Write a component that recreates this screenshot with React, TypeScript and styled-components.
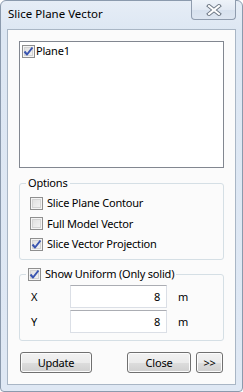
import styled, { createGlobalStyle } from "styled-components";

const GlobalStyle = createGlobalStyle`
  html, body {
    margin: 0;
    padding: 0;
    background: #ffffff;
  }
  body {
    font-family: "Noto Sans", "Open Sans", sans-serif;
    font-size: 11px;
    letter-spacing: -0.2px;
    color: #000;
  }
`;

const Window = styled.div`
  box-sizing: border-box;
  width: 243px;
  height: 392px;
  display: flex;
  flex-direction: column;
  background: linear-gradient(#e6edf6, #dde7f3 30px, #dfe8f4);
  border: 1px solid #8b9aad;
  border-radius: 6px 6px 4px 4px;
`;

const TitleBar = styled.div`
  height: 28px;
  display: flex;
  justify-content: space-between;
  align-items: flex-start;
  padding: 0 6px 0 7px;
`;

const Title = styled.span`
  margin-top: 5px;
  font-size: 11.5px;
  letter-spacing: 0;
  line-height: 16px;
`;

const CloseButton = styled.div`
  box-sizing: border-box;
  width: 45px;
  height: 20px;
  margin-top: -1px;
  display: flex;
  align-items: center;
  justify-content: center;
  border: 1px solid #8f9cae;
  border-top: none;
  border-radius: 0 0 4px 4px;
  background: linear-gradient(#eef3f9, #e2e9f3 50%, #d7e1ee 51%, #dde6f1);
`;

const Client = styled.div`
  flex: 1;
  margin: 0 6px 6px 6px;
  box-sizing: border-box;
  border: 1px solid #a9b6c5;
  background: #fbfbfb;
  padding: 11px 11px 0 11px;
  display: flex;
  flex-direction: column;
`;

const ListBox = styled.div`
  box-sizing: border-box;
  height: 127px;
  border: 1px solid #828790;
  background: #fff;
  padding: 2px 2px;
`;

const Group = styled.fieldset`
  margin: 0;
  box-sizing: border-box;
  height: ${({ $h }: { $h: number }) => $h}px;
  border: 1px solid #d5dfe5;
  border-radius: 3px;
  padding: 2px 0 0 10px;
  display: flex;
  flex-direction: column;
`;

const Legend = styled.legend`
  padding: 0 2px;
  margin-left: -4px;
  line-height: 16px;
  display: flex;
  align-items: center;
`;

const CheckRow = styled.label`
  display: flex;
  align-items: center;
  gap: ${({ $gap }: { $gap?: number }) => $gap ?? 4}px;
  height: ${({ $h }: { $h?: number }) => $h ?? 20.5}px;
  line-height: 16px;
  white-space: nowrap;
`;

const Box = styled.span`
  box-sizing: border-box;
  width: 13px;
  height: 13px;
  flex: none;
  border: 1px solid #8f8f8f;
  display: flex;
  align-items: center;
  justify-content: center;
  box-shadow: inset 0 0 0 1px #f4f4f4, inset 0 0 0 2px #d3d3d3;
  background: linear-gradient(135deg, #dcdcdc, #f6f6f6);
`;

const FieldRow = styled.div`
  display: flex;
  align-items: center;
  height: 25px;
`;

const FieldLabel = styled.span`
  width: 39px;
  padding-left: 1px;
`;

const Input = styled.div`
  box-sizing: border-box;
  width: 97px;
  height: 23px;
  border: 1px solid #dbdfe6;
  border-top-color: #abadb3;
  background: #fff;
  display: flex;
  align-items: center;
  justify-content: flex-end;
  padding-right: 6px;
`;

const Unit = styled.span`
  margin-left: 11px;
`;

const Footer = styled.div`
  display: flex;
  align-items: center;
  margin-top: 11px;
  padding-left: 1px;
`;

const Button = styled.button`
  box-sizing: border-box;
  width: ${({ $w }: { $w: number }) => $w}px;
  height: 21px;
  margin-left: ${({ $ml }: { $ml?: number }) => $ml ?? 0}px;
  border: 1px solid #707070;
  border-radius: 3px;
  background: linear-gradient(#f2f2f2, #ebebeb 50%, #dddddd 51%, #cfcfcf);
  box-shadow: inset 0 0 0 1px #fcfcfc;
  font-family: "Noto Sans", "Open Sans", sans-serif;
  font-size: 11px;
  letter-spacing: -0.2px;
  color: #000;
  padding: 0;
  line-height: 18px;
`;

function Check({ checked }: { checked?: boolean }) {
  return (
    <Box>
      {checked && (
        <svg width="11" height="11" viewBox="0 0 11 11">
          <path
            d="M1.5 5.5 L4 8.5 L9.5 1.5"
            fill="none"
            stroke="#3a55b0"
            strokeWidth="2"
            strokeLinejoin="round"
          />
        </svg>
      )}
    </Box>
  );
}

export default function App() {
  return (
    <>
      <GlobalStyle />
      <Window>
        <TitleBar>
          <Title>Slice Plane Vector</Title>
          <CloseButton>
            <svg width="16" height="12" viewBox="0 0 16 12">
              <path
                d="M3 2 L13 10 M13 2 L3 10"
                stroke="#6f7986"
                strokeWidth="4"
                strokeLinecap="square"
              />
              <path
                d="M3 2 L13 10 M13 2 L3 10"
                stroke="#ffffff"
                strokeWidth="2"
                strokeLinecap="square"
              />
            </svg>
          </CloseButton>
        </TitleBar>
        <Client>
          <ListBox>
            <CheckRow $gap={1} $h={14}>
              <Check checked />
              Plane1
            </CheckRow>
          </ListBox>
          <div style={{ height: 7 }} />
          <Group $h={85}>
            <Legend>Options</Legend>
            <CheckRow>
              <Check />
              Slice Plane Contour
            </CheckRow>
            <CheckRow>
              <Check />
              Full Model Vector
            </CheckRow>
            <CheckRow>
              <Check checked />
              Slice Vector Projection
            </CheckRow>
          </Group>
          <div style={{ height: 6 }} />
          <Group $h={75}>
            <Legend>
              <CheckRow $h={16}>
                <Check checked />
                Show Uniform (Only solid)
              </CheckRow>
            </Legend>
            <FieldRow>
              <FieldLabel>X</FieldLabel>
              <Input>8</Input>
              <Unit>m</Unit>
            </FieldRow>
            <FieldRow>
              <FieldLabel>Y</FieldLabel>
              <Input>8</Input>
              <Unit>m</Unit>
            </FieldRow>
          </Group>
          <Footer>
            <Button $w={72}>Update</Button>
            <Button $w={64} $ml={35}>
              Close
            </Button>
            <Button $w={27} $ml={5}>
              &gt;&gt;
            </Button>
          </Footer>
        </Client>
      </Window>
    </>
  );
}
